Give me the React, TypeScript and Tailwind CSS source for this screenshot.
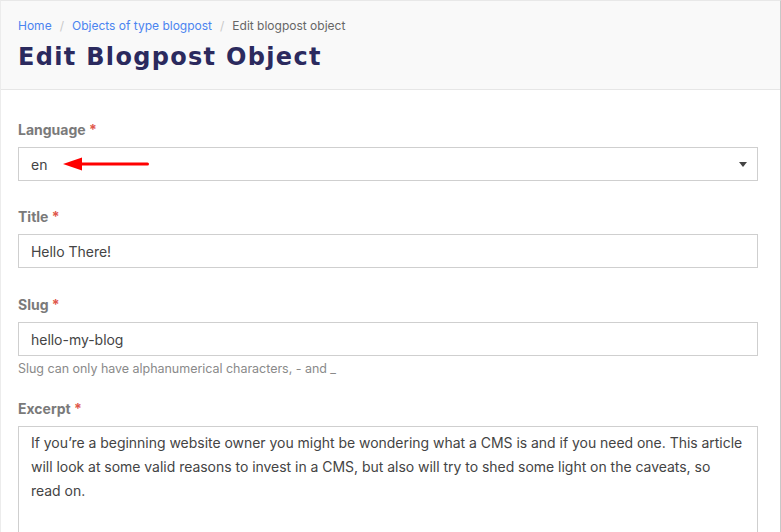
import React from "react";

const Req = () => <span className="text-[#e0584c]"> *</span>;

export default function App() {
  return (
    <div className="w-[781px] h-[532px] overflow-hidden bg-white border-t border-l border-t-[#e8e8e8] border-l-[#ececec] border-r border-r-[#c8c8c8] font-['Inter',sans-serif]">
      <div className="h-[89px] bg-[#f9f9f9] border-b border-[#e6e6e6] pl-[17px] pt-[16px]">
        <div className="flex items-center text-[12px] leading-[18px] h-[18px]">
          <span className="text-[#4b84f0]">Home</span>
          <span className="text-[#c9c9c9] mx-[8px]">/</span>
          <span className="text-[#4b84f0]">Objects of type blogpost</span>
          <span className="text-[#c9c9c9] mx-[8px]">/</span>
          <span className="text-[#666]">Edit blogpost object</span>
        </div>
        <h1 className="mt-[8px] text-[24px] leading-[28px] font-bold text-[#2b2a5e] tracking-[0.055em] font-['DejaVu_Sans',sans-serif]">
          Edit Blogpost Object
        </h1>
      </div>
      <div className="px-[17px] pt-[30px] text-[14px] tracking-[-0.03px]">
        <label className="block text-[14px] leading-[20px] font-bold text-[#7a7a7a] tracking-normal">
          Language<Req />
        </label>
        <div className="relative mt-[7px] w-[740px] h-[34px] border border-[#cfcfcf] flex items-center pl-[12px] text-[#444]">
          en
          <svg className="absolute left-[44px] top-[9px]" width="90" height="14" viewBox="0 0 90 14">
            <polygon points="0,7 19,0.5 19,13.5" fill="#f00" />
            <rect x="17" y="5.5" width="69" height="3" rx="1.5" fill="#f00" />
          </svg>
          <svg className="absolute right-[10px] top-[14px]" width="8" height="5" viewBox="0 0 8 5">
            <polygon points="0,0 8,0 4,5" fill="#444" />
          </svg>
        </div>

        <label className="block mt-[26px] text-[14px] leading-[20px] font-bold text-[#7a7a7a] tracking-normal">
          Title<Req />
        </label>
        <div className="mt-[7px] w-[740px] h-[34px] border border-[#cfcfcf] flex items-center pl-[12px] text-[#444]">
          Hello There!
        </div>

        <label className="block mt-[27px] text-[14px] leading-[20px] font-bold text-[#7a7a7a] tracking-normal">
          Slug<Req />
        </label>
        <div className="mt-[7px] w-[740px] h-[34px] border border-[#cfcfcf] flex items-center pl-[12px] text-[#444]">
          hello-my-blog
        </div>
        <div className="mt-[5px] text-[12.5px] leading-[16px] text-[#8a8a8a]">
          Slug can only have alphanumerical characters, - and _
        </div>

        <label className="block mt-[22px] text-[14px] leading-[20px] font-bold text-[#7a7a7a] tracking-normal">
          Excerpt<Req />
        </label>
        <div className="mt-[7px] w-[740px] h-[140px] border border-[#cfcfcf] pl-[12px] pr-[14px] pt-[4px] leading-[24px] text-[#444]">
          If you’re a beginning website owner you might be wondering what a CMS is and if you need one. This article will look at some valid reasons to invest in a CMS, but also will try to shed some light on the caveats, so read on.
        </div>
      </div>
    </div>
  );
}
